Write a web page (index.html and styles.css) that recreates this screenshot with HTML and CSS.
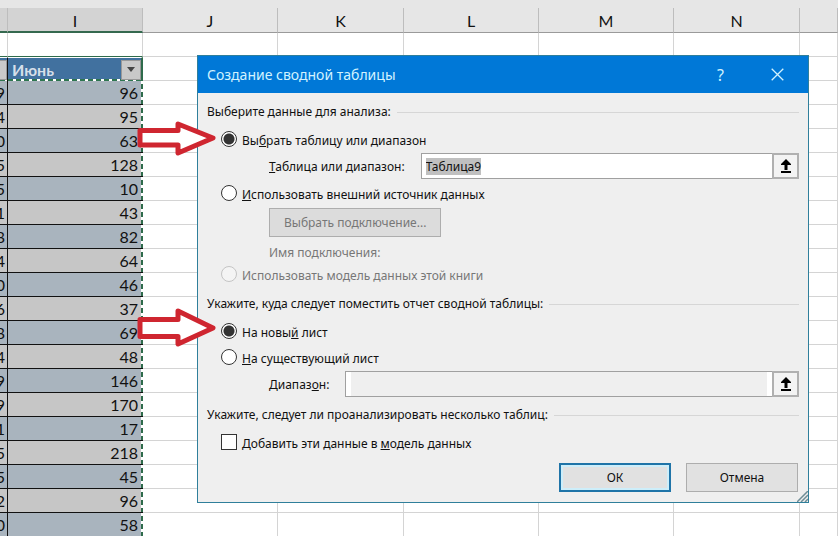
FILE: index.html
```html
<!DOCTYPE html>
<html lang="ru">
<head>
    <meta charset="UTF-8">
    <meta name="viewport" content="width=device-width, initial-scale=1.0">
    <title>Создание сводной таблицы</title>
    <link rel="stylesheet" href="styles.css">
</head>
<body>
    <main class="sheet">
        <table class="grid">
            <colgroup>
                <col class="col-h"><col class="col-wide"><col class="col-wide"><col class="col-mid">
                <col class="col-wide"><col class="col-wide"><col class="col-mid"><col>
            </colgroup>
            <thead>
                <tr>
                    <th class="active"></th><th class="active">I</th><th>J</th><th>K</th><th>L</th><th>M</th><th>N</th><th></th>
                </tr>
            </thead>
            <tbody id="rows">
                <tr class="blank"><td></td><td></td><td></td><td></td><td></td><td></td><td></td><td></td></tr>
                <tr class="table-head">
                    <td><span class="filter"></span></td>
                    <td>
                        <div class="head-cell">
                            <span>Июнь</span>
                            <button class="filter" type="button" aria-label="Фильтр">
                                <svg width="8" height="5" viewBox="0 0 8 5"><path d="M0 0h8L4 5z" fill="#444"/></svg>
                            </button>
                        </div>
                    </td>
                    <td></td><td></td><td></td><td></td><td></td><td></td>
                </tr>
            </tbody>
        </table>
    </main>

    <form class="dialog" role="dialog" aria-labelledby="title">
        <header class="titlebar">
            <h1 id="title">Создание сводной таблицы</h1>
            <button type="button" aria-label="Справка">?</button>
            <button type="button" aria-label="Закрыть">
                <svg width="13" height="13" viewBox="0 0 13 13"><path d="M.7.7l11.6 11.6M12.3.7L.7 12.3" stroke="currentColor" stroke-width="1.3"/></svg>
            </button>
        </header>

        <fieldset>
            <legend>Выберите данные для анализа:</legend>
            <div class="option">
                <svg class="arrow" width="80" height="36" viewBox="0 0 80 36"><path d="M3 9.500H41V3L76 17 41 32V24H3z"/></svg>
                <input type="radio" name="source" id="srcRange" checked>
                <label for="srcRange">Вы<u>б</u>рать таблицу или диапазон</label>
            </div>
            <div class="sub field">
                <label for="range"><u>Т</u>аблица или диапазон:</label>
                <input type="text" id="range" value="Таблица9">
                <button class="pick" type="button" aria-label="Свернуть">
                    <svg width="10" height="14" viewBox="0 0 10 14"><path d="M5 0l5 5v1H6.500v5h-3V6H0V5zM0 12h10v2H0z"/></svg>
                </button>
            </div>
            <div class="option">
                <input type="radio" name="source" id="srcExternal">
                <label for="srcExternal"><u>И</u>спользовать внешний источник данных</label>
            </div>
            <div class="sub connection">
                <button class="btn" type="button" disabled>Выбрать подключение...</button>
            </div>
            <div class="sub connection-name">Имя подключения:</div>
            <div class="option">
                <input type="radio" name="source" id="srcModel" disabled>
                <label for="srcModel">Использовать модель данных этой книги</label>
            </div>
        </fieldset>

        <fieldset>
            <legend>Укажите, куда следует поместить отчет сводной таблицы:</legend>
            <div class="option">
                <svg class="arrow" width="80" height="46" viewBox="0 0 80 46"><path d="M3 11.500H41V3L76 20 41 36V28.500H3z"/></svg>
                <input type="radio" name="target" id="newSheet" checked>
                <label for="newSheet">На новы<u>й</u> лист</label>
            </div>
            <div class="option">
                <input type="radio" name="target" id="oldSheet">
                <label for="oldSheet"><u>Н</u>а существующий лист</label>
            </div>
            <div class="sub field">
                <label for="place">Диапаз<u>о</u>н:</label>
                <input type="text" id="place" disabled>
                <button class="pick" type="button" aria-label="Свернуть">
                    <svg width="10" height="14" viewBox="0 0 10 14"><path d="M5 0l5 5v1H6.500v5h-3V6H0V5zM0 12h10v2H0z"/></svg>
                </button>
            </div>
        </fieldset>

        <fieldset>
            <legend>Укажите, следует ли проанализировать несколько таблиц:</legend>
            <div class="option">
                <input type="checkbox" id="addModel">
                <label for="addModel">Добавить эти данные в <u>м</u>одель данных</label>
            </div>
        </fieldset>

        <footer class="buttons">
            <button class="btn primary" type="submit">ОК</button>
            <button class="btn" type="button">Отмена</button>
        </footer>
        <svg class="grip" width="11" height="11" viewBox="0 0 11 11"><path d="M0 11L11 0M4 11l7-7M8 11l3-3" stroke="#6f8d96" stroke-width="1.500"/></svg>
    </form>

    <script>
        // столбцы H и I
        const data = [
            [9, 96], [4, 95], [0, 63], [5, 128], [5, 10], [1, 43], [8, 82],
            [4, 64], [0, 46], [6, 37], [8, 69], [4, 48], [9, 146], [9, 170],
            [1, 17], [5, 218], [5, 45], [2, 96], [0, 58]
        ];
        document.getElementById('rows').innerHTML += data.map(([h, i]) =>
            `<tr class="data"><td>${h}</td><td>${i}</td>${'<td></td>'.repeat(6)}</tr>`
        ).join('');

        const range = document.getElementById('range');
        range.focus();
        range.select();
    </script>
</body>
</html>
```
FILE: styles.css
```css
* {
    box-sizing: border-box;
}
body {
    margin: 0;
    font-family: "Noto Sans", sans-serif;
    font-size: 12px;
    color: #111;
    background: #fff;
}
button, input {
    font: inherit;
    color: inherit;
}
.sheet {
    height: 100vh;
    overflow: hidden;
    padding-top: 8px;
    background: #e6e6e6;
    font-family: Lato, "Noto Sans", sans-serif;
    font-size: 16px;
}
.grid {
    width: 100%;
    table-layout: fixed;
    border-collapse: separate;
    border-spacing: 0;
    background: #fff;
}
.col-h {
    width: 8px;
}
.col-wide {
    width: 135px;
}
.col-mid {
    width: 126px;
}
.grid th {
    height: 25px;
    padding: 2px 0 0;
    background: #e6e6e6;
    border-right: 1px solid #bdbdbd;
    border-bottom: 1px solid #9a9a9a;
    font-weight: normal;
    line-height: 20px;
}
.grid th.active {
    background: #d3d3d3;
    border-bottom: 2px solid #35694f;
}
.grid td {
    height: 24px;
    padding: 0;
    border-right: 1px solid #d4d4d4;
    border-bottom: 1px solid #d4d4d4;
    line-height: 20px;
}
.blank td:nth-child(-n+2) {
    border-bottom-color: #2e6b4b;
}
.table-head td:nth-child(-n+2) {
    background: repeating-linear-gradient(90deg, #2e7550 0 5px, #fff 5px 8px) bottom / 100% 2px no-repeat #41719f;
    border-top: 1px solid #fff;
    border-bottom: 0;
}
.table-head td:first-child {
    border-right-color: #111;
}
.table-head td:nth-child(2) {
    border-right: 2px solid #2e6b4b;
}
.head-cell {
    display: flex;
    align-items: center;
    justify-content: space-between;
    padding-left: 4px;
    color: #d5dfe9;
    font-weight: bold;
}
.filter {
    display: flex;
    align-items: center;
    justify-content: center;
    width: 20px;
    height: 20px;
    padding: 0;
    border: 1px solid #999;
    background: #c9c9c9;
}
.table-head td:first-child .filter {
    width: 7px;
    border-left: 0;
}
.data td:nth-child(-n+2) {
    background-color: #c6c6c6;
    border-color: #111;
    direction: rtl;
    padding-right: 3px;
}
.data:nth-child(odd) td:nth-child(-n+2) {
    background-color: #a9b4be;
}
/* бегущая рамка копирования */
.grid .data td:nth-child(2) {
    padding-right: 5px;
    border-right: 0;
    background-image: repeating-linear-gradient(#fff 0 3px, #2e6b4b 3px 8px);
    background-position: right;
    background-size: 2px 100%;
    background-repeat: no-repeat;
}

.dialog {
    position: absolute;
    top: 55px;
    left: 197px;
    width: 612px;
    background: #efefef;
    border: 1px solid #2f7f9b;
}
.titlebar {
    display: flex;
    align-items: center;
    height: 37px;
    padding: 0 2px 0 9px;
    background: #0078d7;
    color: #d2f3ff;
}
.titlebar h1 {
    flex: 1;
    margin: 0;
    font-size: 14px;
    font-weight: normal;
}
.titlebar button {
    display: flex;
    align-items: center;
    justify-content: center;
    width: 57px;
    height: 36px;
    padding: 0;
    border: 0;
    background: none;
    font-size: 16px;
}
fieldset {
    min-width: 0;
    margin: 7px 9px 0;
    padding: 4px 0 0;
    border: 0;
    border-top: 1px solid #d6d6d6;
}
.titlebar + fieldset {
    margin-top: 9px;
}
legend {
    height: 20px;
    padding: 0 6px 0 0;
    line-height: 20px;
}
.option {
    position: relative;
    display: flex;
    align-items: center;
    gap: 5px;
    height: 26px;
    padding-left: 14px;
}
.option label {
    padding-top: 2px;
}
.option input {
    appearance: none;
    flex: none;
    width: 16px;
    height: 16px;
    margin: 0;
    border: 1px solid #333;
    background: #fff;
}
.option input[type="radio"] {
    border-radius: 50%;
}
.option input[type="radio"]:checked {
    background: radial-gradient(circle, #333 0 5px, #fff 6px);
}
.option input:disabled {
    border-color: #c4c4c4;
    background: #f4f4f4;
}
.option input:disabled + label {
    color: #777;
}
.arrow {
    position: absolute;
    right: 100%;
    margin-right: -10px;
    fill: #fff;
    stroke: #cf2630;
    stroke-width: 5;
    stroke-linejoin: round;
}
.sub {
    display: flex;
    padding-left: 62px;
}
.field {
    align-items: center;
    height: 28px;
}
.field label {
    margin-right: 16px;
}
.field input {
    flex: 1;
    min-width: 0;
    height: 26px;
    padding: 0 4px;
    border: 1px solid #a0a0a0;
    border-right: 0;
    background: #fff;
    outline: 0;
}
.field input:disabled {
    padding: 0 5px;
    background: linear-gradient(#efefef, #efefef) content-box, #fff;
}
.field input::selection {
    background: #c0c0c0;
    color: #111;
}
.pick {
    display: flex;
    align-items: center;
    justify-content: center;
    width: 27px;
    height: 26px;
    padding: 0;
    border: 2px solid #b0b0b0;
    background: #f3f3f3;
}
.btn {
    height: 29px;
    padding: 0 14px;
    border: 1px solid #adadad;
    background: #e1e1e1;
}
.btn:disabled {
    color: #777;
    background: #dcdcdc;
}
.connection {
    align-items: flex-end;
    height: 31px;
}
.connection-name {
    align-items: flex-end;
    height: 24px;
    color: #777;
}
.buttons {
    display: flex;
    justify-content: flex-end;
    gap: 15px;
    padding: 8px 10px 10px;
}
.buttons .btn {
    width: 112px;
}
.buttons .primary {
    border: 2px solid #1f74a8;
    box-shadow: inset 0 0 0 2px #cdeefa;
}
.grip {
    position: absolute;
    right: 0;
    bottom: 0;
}
```
